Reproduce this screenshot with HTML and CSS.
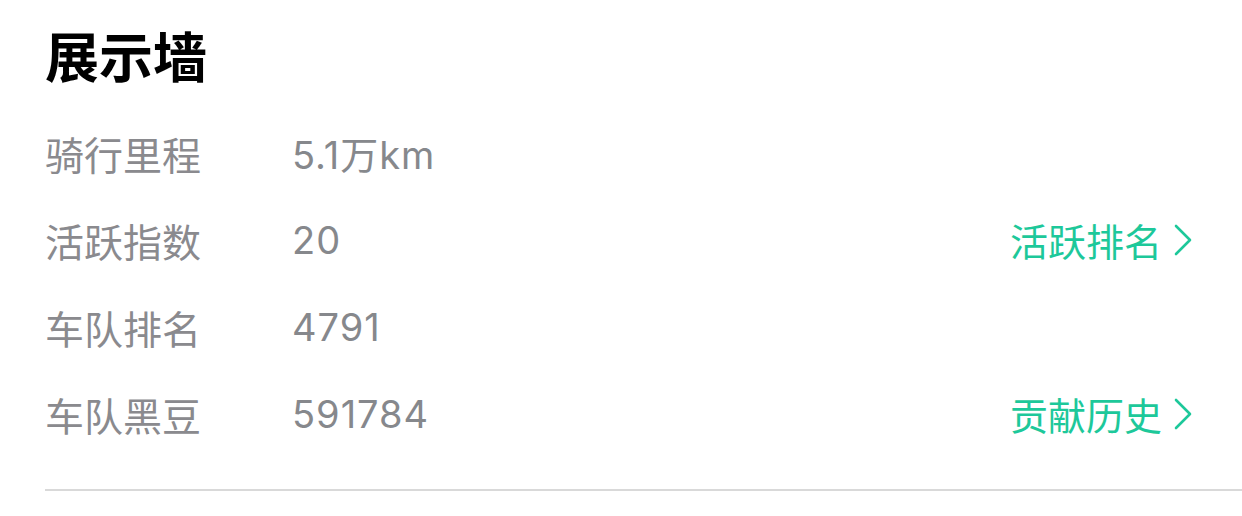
FILE: index.html
```html
<!DOCTYPE html>
<html lang="zh">
<head>
<meta charset="utf-8">
<link rel="stylesheet" href="styles.css">
</head>
<body>
<section class="wall">
  <h1 class="title">展示墙</h1>
  <div class="row">
    <span class="label">骑行里程</span>
    <span class="value">5.1万km</span>
  </div>
  <div class="row">
    <span class="label">活跃指数</span>
    <span class="value">20</span>
    <a class="link">活跃排名<svg class="chev" viewBox="0 0 18 32" width="18" height="32"><path d="M2 2 L16 16 L2 30" fill="none" stroke="currentColor" stroke-width="2.6" stroke-linecap="round" stroke-linejoin="round"/></svg></a>
  </div>
  <div class="row">
    <span class="label">车队排名</span>
    <span class="value">4791</span>
  </div>
  <div class="row">
    <span class="label">车队黑豆</span>
    <span class="value">591784</span>
    <a class="link">贡献历史<svg class="chev" viewBox="0 0 18 32" width="18" height="32"><path d="M2 2 L16 16 L2 30" fill="none" stroke="currentColor" stroke-width="2.6" stroke-linecap="round" stroke-linejoin="round"/></svg></a>
  </div>
  <div class="divider"></div>
</section>
</body>
</html>
```

FILE: styles.css
```css
html, body {
  margin: 0;
  padding: 0;
  background: #ffffff;
}
body {
  font-family: Inter, "Noto Sans CJK SC", sans-serif;
}
.wall {
  padding: 18px 0 0 45px;
}
.title {
  margin: 0;
  height: 91px;
  line-height: 74px;
  font-size: 54px;
  font-weight: 700;
  color: #000;
  font-family: "Noto Sans CJK SC", sans-serif;
}
.row {
  display: flex;
  align-items: center;
  height: 87px;
  padding-right: 50px;
}
.label {
  width: 247px;
  flex: none;
  font-family: "Noto Sans CJK SC", sans-serif;
  font-size: 39px;
  color: #8a8a8e;
}
.value {
  flex: 1;
  font-size: 38px;
  letter-spacing: 1px;
  color: #86888c;
}
.link {
  display: flex;
  align-items: center;
  gap: 12px;
  font-family: "Noto Sans CJK SC", sans-serif;
  font-size: 38px;
  color: #1dc89a;
}
.chev {
  display: block;
}
.divider {
  height: 2px;
  background: #d9d9d9;
  margin-top: 32px;
}
```
